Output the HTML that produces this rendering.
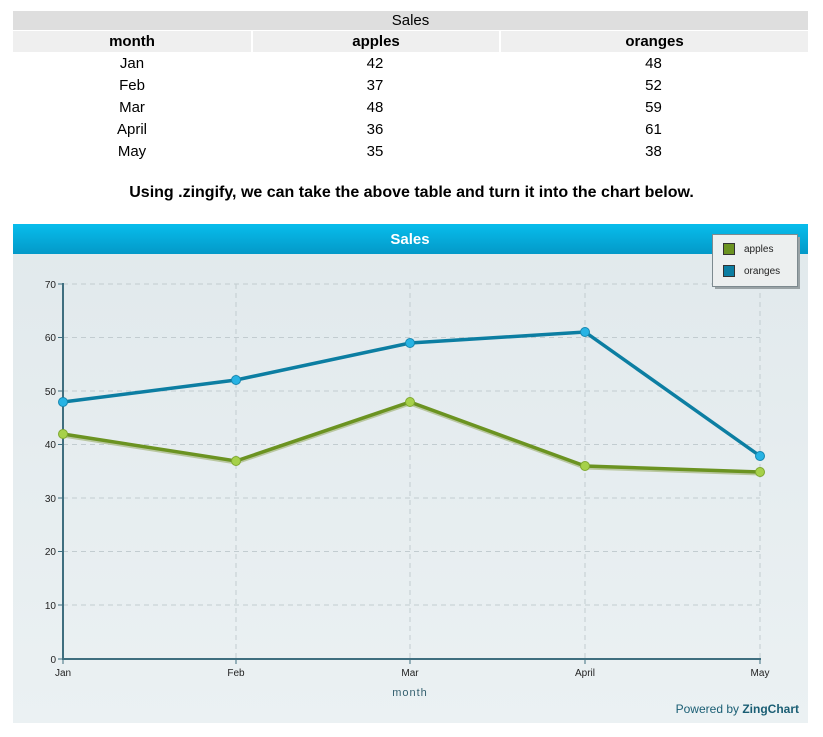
<!DOCTYPE html>
<html><head><style>
body{margin:0;background:#fff;font-family:"Liberation Sans",Arial,sans-serif;width:823px;height:737px;position:relative;overflow:hidden}
table{position:absolute;left:13px;top:11px;width:795px;border-collapse:separate;border-spacing:0;font-size:15px}
td,th{text-align:center;padding:0;height:22px;line-height:22px}
.cap{background:#dedede;height:19px;line-height:19px;font-weight:normal}
.h th{background:#efefef;border-left:2px solid #fff;font-weight:bold;height:21px;line-height:21px;border-top:1px solid #fff;border-bottom:1px solid #fff}
.h th:first-child{border-left:none}
.note{position:absolute;top:184px;left:0;width:823px;text-align:center;font-weight:bold;font-size:16px}
</style></head><body>
<table>
<tr><th class="cap" colspan="3">Sales</th></tr>
<tr class="h"><th style="width:238px">month</th><th style="width:246px">apples</th><th>oranges</th></tr>
<tr><td>Jan</td><td>42</td><td>48</td></tr>
<tr><td>Feb</td><td>37</td><td>52</td></tr>
<tr><td>Mar</td><td>48</td><td>59</td></tr>
<tr><td>April</td><td>36</td><td>61</td></tr>
<tr><td>May</td><td>35</td><td>38</td></tr>
</table>
<div class="note">Using .zingify, we can take the above table and turn it into the chart below.</div>
<svg style="position:absolute;left:0;top:0" width="823" height="737" font-family="Liberation Sans, Arial, sans-serif">
<defs>
<linearGradient id="tb" x1="0" y1="0" x2="0" y2="1"><stop offset="0" stop-color="#08bdec"/><stop offset="1" stop-color="#0399c8"/></linearGradient>
<linearGradient id="bg" x1="0" y1="0" x2="0" y2="1"><stop offset="0" stop-color="#e1e9ec"/><stop offset="1" stop-color="#ebf1f3"/></linearGradient>
</defs>
<rect x="13" y="224" width="795" height="499" fill="url(#bg)"/>
<rect x="13" y="224" width="795" height="30" fill="url(#tb)"/>
<text x="410" y="244" fill="#fff" font-size="15" font-weight="bold" text-anchor="middle">Sales</text>
<g stroke="#c2ccd0" stroke-dasharray="5,4" stroke-width="1">
<line x1="63" y1="284" x2="760" y2="284"/><line x1="63" y1="337.5" x2="760" y2="337.5"/><line x1="63" y1="391" x2="760" y2="391"/><line x1="63" y1="444.5" x2="760" y2="444.5"/><line x1="63" y1="498" x2="760" y2="498"/><line x1="63" y1="551.5" x2="760" y2="551.5"/><line x1="63" y1="605" x2="760" y2="605"/>
<line x1="236" y1="284" x2="236" y2="659"/><line x1="410" y1="284" x2="410" y2="659"/><line x1="585" y1="284" x2="585" y2="659"/><line x1="760" y1="284" x2="760" y2="659"/>
</g>
<g stroke="#3f6e7f" stroke-width="2"><line x1="63" y1="283" x2="63" y2="660"/><line x1="62" y1="659" x2="761" y2="659"/></g>
<g stroke="#3f6e7f" stroke-width="1"><line x1="58" y1="284" x2="63" y2="284"/><line x1="58" y1="337.5" x2="63" y2="337.5"/><line x1="58" y1="391" x2="63" y2="391"/><line x1="58" y1="444.5" x2="63" y2="444.5"/><line x1="58" y1="498" x2="63" y2="498"/><line x1="58" y1="551.5" x2="63" y2="551.5"/><line x1="58" y1="605" x2="63" y2="605"/><line x1="58" y1="659" x2="63" y2="659"/>
<line x1="236" y1="659" x2="236" y2="664"/><line x1="410" y1="659" x2="410" y2="664"/><line x1="585" y1="659" x2="585" y2="664"/><line x1="760" y1="659" x2="760" y2="664"/><line x1="63" y1="659" x2="63" y2="664"/></g>
<g font-size="10" fill="#222" text-anchor="end">
<text x="56" y="288">70</text><text x="56" y="341">60</text><text x="56" y="395">50</text><text x="56" y="448">40</text><text x="56" y="502">30</text><text x="56" y="555">20</text><text x="56" y="609">10</text><text x="56" y="663">0</text></g>
<g font-size="10" fill="#222" text-anchor="middle">
<text x="63" y="676">Jan</text><text x="236" y="676">Feb</text><text x="410" y="676">Mar</text><text x="585" y="676">April</text><text x="760" y="676">May</text></g>
<text x="410" y="696" font-size="11" fill="#35606f" text-anchor="middle" letter-spacing="1">month</text>
<text x="799" y="713" font-size="12" fill="#1a5e74" text-anchor="end">Powered by <tspan font-weight="bold">ZingChart</tspan></text>
<polyline points="63,436 236,463 410,404 585,468 760,474" fill="none" stroke="#b9c7a0" stroke-width="3"/>
<polyline points="63,434 236,461 410,402 585,466 760,472" fill="none" stroke="#6b9321" stroke-width="3.5"/>
<polyline points="63,402 236,380 410,343 585,332 760,456" fill="none" stroke="#0c7ea2" stroke-width="3.5"/>
<g fill="#a6d14a" stroke="#7fa82f"><circle cx="63" cy="434" r="4.5"/><circle cx="236" cy="461" r="4.5"/><circle cx="410" cy="402" r="4.5"/><circle cx="585" cy="466" r="4.5"/><circle cx="760" cy="472" r="4.5"/></g>
<g fill="#27b3e4" stroke="#1687b0"><circle cx="63" cy="402" r="4.5"/><circle cx="236" cy="380" r="4.5"/><circle cx="410" cy="343" r="4.5"/><circle cx="585" cy="332" r="4.5"/><circle cx="760" cy="456" r="4.5"/></g>
<rect x="715" y="237" width="85" height="52" fill="#9aa3a6"/>
<rect x="712.5" y="234.5" width="85" height="52" fill="#ecefef" stroke="#7d8a8f"/>
<rect x="723.5" y="243.5" width="11" height="11" fill="#6b9321" stroke="#333"/>
<rect x="723.5" y="265.5" width="11" height="11" fill="#0c7ea2" stroke="#333"/>
<text x="744" y="252" font-size="10" fill="#222">apples</text>
<text x="744" y="274" font-size="10" fill="#222">oranges</text>
</svg>
</body></html>
